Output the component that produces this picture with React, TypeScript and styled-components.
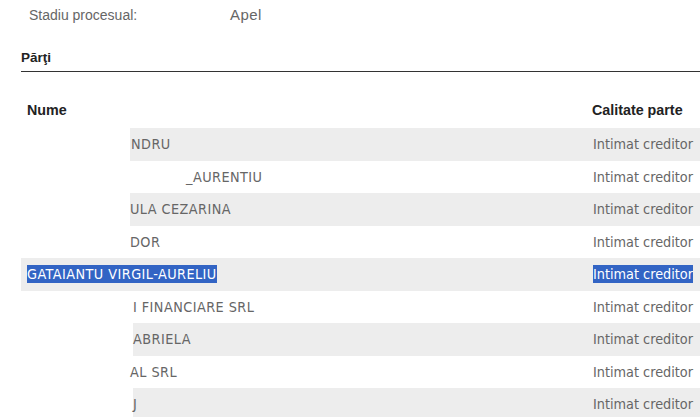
import React from "react";
import styled, { createGlobalStyle } from "styled-components";

const GlobalStyle = createGlobalStyle`
  html, body { margin: 0; padding: 0; background: #fff; }
  body { font-family: "Liberation Sans", Arial, sans-serif; }
`;

const Page = styled.div`
  width: 700px;
  height: 417px;
  overflow: hidden;
  background: #fff;
`;

const InfoRow = styled.div`
  display: flex;
  padding: 6px 0 0 29px;
  font-size: 14px;
  line-height: 18px;
  color: #666;
`;

const InfoLabel = styled.span`
  width: 201px;
`;

const InfoValue = styled.span`
  font-size: 15px;
  letter-spacing: 0.4px;
`;

const SectionTitle = styled.div`
  margin: 26px 0 0 21px;
  padding-bottom: 5px;
  border-bottom: 1px solid #333;
  font-size: 13.5px;
  font-weight: bold;
  line-height: 16px;
  color: #222;
`;

const HeaderRow = styled.div`
  display: flex;
  margin: 29px 0 0 27px;
  height: 27px;
  font-size: 14.3px;
  font-weight: bold;
  line-height: 18px;
  color: #222;
`;

const HeaderName = styled.div`
  flex: 1;
`;

const HeaderRole = styled.div`
  width: 108px;
`;

const Row = styled.div<{ $offset: number; $striped: boolean }>`
  display: flex;
  align-items: center;
  height: 32.5px;
  margin-left: ${(p) => p.$offset}px;
  background: ${(p) => (p.$striped ? "#ededed" : "#fff")};
  font-family: "DejaVu Sans Condensed", "DejaVu Sans", sans-serif;
  font-size: 14.3px;
  color: #666;
`;

const NameCell = styled.div<{ $indent: number }>`
  flex: 1;
  padding-left: ${(p) => p.$indent}px;
  white-space: nowrap;
  letter-spacing: 0.45px;
`;

const RoleCell = styled.div`
  width: 107px;
  white-space: nowrap;
`;

const Selected = styled.span`
  background: #3264c4;
  color: #fff;
  padding: 1px 0;
`;

type Party = {
  name: string;
  offset: number;
  indent: number;
  selected?: boolean;
};

const parties: Party[] = [
  { name: "NDRU", offset: 130, indent: 1 },
  { name: "_AURENTIU", offset: 130, indent: 56 },
  { name: "ULA CEZARINA", offset: 130, indent: 0 },
  { name: "DOR", offset: 130, indent: 0 },
  { name: "GATAIANTU VIRGIL-AURELIU", offset: 21, indent: 6, selected: true },
  { name: "I FINANCIARE SRL", offset: 130, indent: 3 },
  { name: "ABRIELA", offset: 133, indent: 0 },
  { name: "AL SRL", offset: 130, indent: 0 },
  { name: "J", offset: 133, indent: 0 },
];

export default function App() {
  return (
    <Page>
      <GlobalStyle />
      <InfoRow>
        <InfoLabel>Stadiu procesual:</InfoLabel>
        <InfoValue>Apel</InfoValue>
      </InfoRow>
      <SectionTitle>Părţi</SectionTitle>
      <HeaderRow>
        <HeaderName>Nume</HeaderName>
        <HeaderRole>Calitate parte</HeaderRole>
      </HeaderRow>
      {parties.map((p, i) => (
        <Row key={i} $offset={p.offset} $striped={i % 2 === 0}>
          <NameCell $indent={p.indent}>
            {p.selected ? <Selected>{p.name}</Selected> : p.name}
          </NameCell>
          <RoleCell>
            {p.selected ? <Selected>Intimat creditor</Selected> : "Intimat creditor"}
          </RoleCell>
        </Row>
      ))}
    </Page>
  );
}
